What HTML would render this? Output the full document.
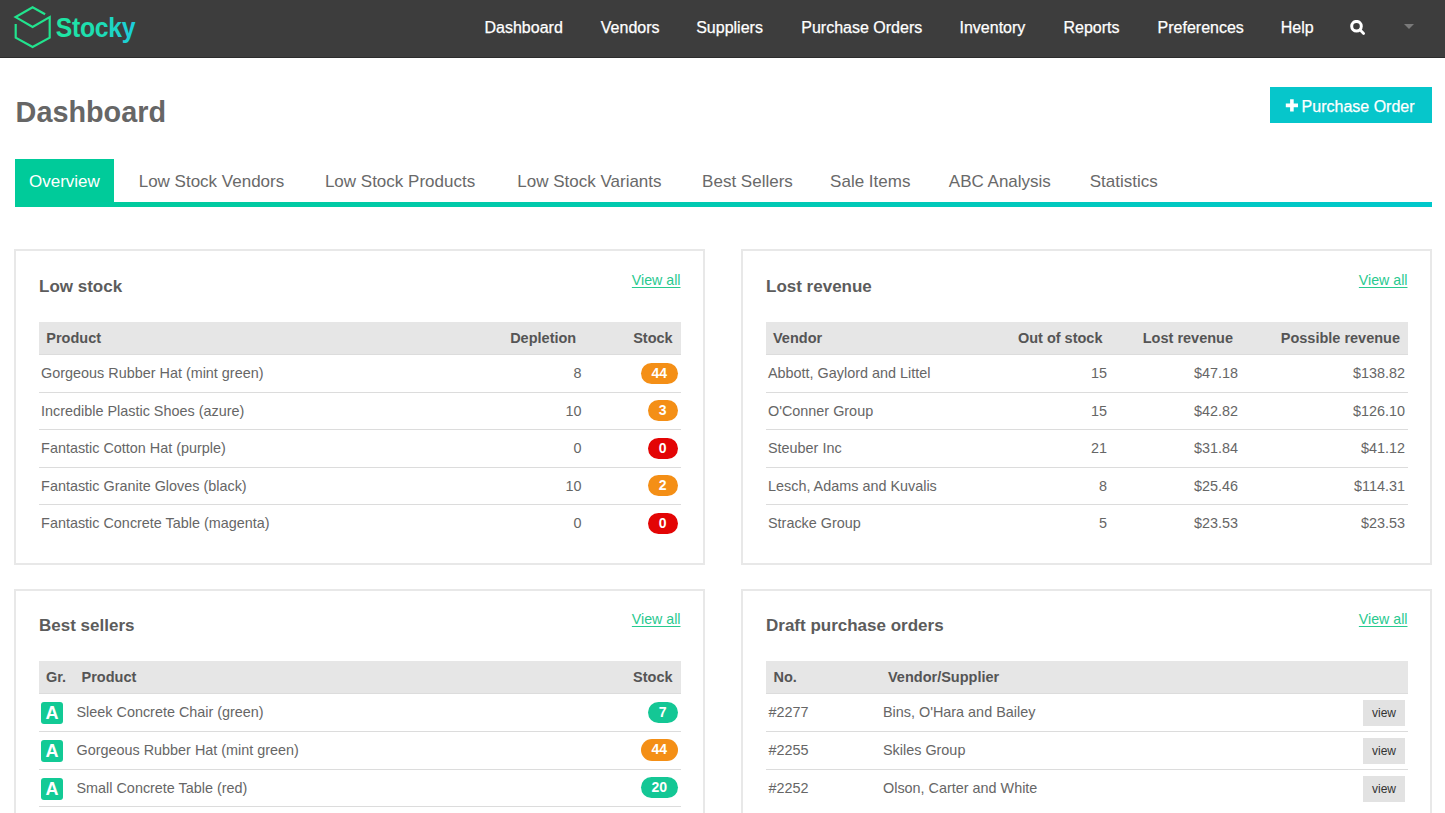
<!DOCTYPE html>
<html><head><meta charset="utf-8">
<style>
*{box-sizing:border-box}
html,body{margin:0;padding:0}
body{width:1445px;height:813px;overflow:hidden;background:#fff;position:relative;font-family:"Liberation Sans",sans-serif;color:#666}
.nav .it,.btn span{-webkit-text-stroke:0.25px currentColor}
.abs{position:absolute;white-space:nowrap;line-height:1}
.nav{position:absolute;left:0;top:0;width:1445px;height:58px;background:#3d3d3d;border-bottom:1px solid #2c2c2c}
.nav .it{position:absolute;top:20.3px;font-size:16px;line-height:1;color:#fff;white-space:nowrap}
.title{position:absolute;left:15.6px;top:97.8px;font-size:28.8px;font-weight:700;line-height:1;color:#666}
.btn{position:absolute;left:1270px;top:87px;width:161.5px;height:36px;background:#06c6cb}
.tabbar{position:absolute;left:14.5px;top:202px;width:1417px;height:5px;background:linear-gradient(90deg,#00cb9a,#00c8cb)}
.tabact{position:absolute;left:14.5px;top:159px;width:99.5px;height:48px;background:#00cb9a}
.tab{position:absolute;top:172.8px;font-size:17px;line-height:1;color:#696969;white-space:nowrap}
.panel{position:absolute;width:691px;border:2px solid #e8e8e8;background:#fff}
.ptitle{position:absolute;left:23px;top:26.5px;font-size:17px;font-weight:700;line-height:1;color:#5c5c5c;white-space:nowrap}
.viewall{position:absolute;right:22.5px;top:21.8px;font-size:14.2px;line-height:1;color:#28c98f;text-decoration:underline;text-underline-offset:1.8px;text-decoration-thickness:1.3px;white-space:nowrap}
.tbl{position:absolute;left:23px;top:71px;width:641.5px}
.th{position:relative;height:33px;background:#e6e6e6;border-bottom:1px solid #dcdcdc}
.th span{position:absolute;top:0;line-height:32px;font-size:14.5px;font-weight:700;color:#555;white-space:nowrap}
.tr{position:relative;height:37.6px;border-bottom:1px solid #dcdcdc}
.tr.last{border-bottom:none}
.tr span{position:absolute;top:0;line-height:36.6px;font-size:14.4px;color:#666;white-space:nowrap}
.r{text-align:right}
.badge{position:absolute;height:21.2px;top:7.5px;border-radius:11px;color:#fff;font-weight:700;font-size:14px;line-height:21.6px;text-align:center}
.or{background:#f48f16}
.rd{background:#e30505}
.gn{background:#14c795}
.grade{position:absolute;left:2.2px;top:8px;width:21.6px;height:22px;border-radius:3px;background:#12ca95;color:#fff;font-weight:700;font-size:18px;line-height:23px;text-align:center}
.vbtn{position:absolute;right:2.5px;top:6px;width:42px;height:26px;background:#e2e2e2;color:#333;font-size:12px;line-height:26px;text-align:center}
</style></head>
<body>
<div class="nav">
  <svg style="position:absolute;left:0;top:0" width="60" height="57" viewBox="0 0 60 57">
    <defs></defs>
    <path d="M45.1,14.3 L32.6,7.2 L15.6,17.1 L32.6,26.9 L49.7,17.1 L49.7,37.7 L32.6,46.9 L15.7,37.7 L15.7,24.1" fill="none" stroke="#22e38e" stroke-width="2.2" stroke-linejoin="miter"/>
  </svg>
  <svg style="position:absolute;left:54px;top:8px" width="90" height="40" viewBox="0 0 90 40">
    <defs><linearGradient id="lg" x1="0" y1="0" x2="1" y2="0"><stop offset="0" stop-color="#1ee6a0"/><stop offset="0.55" stop-color="#1ddcb4"/><stop offset="1" stop-color="#1ccce0"/></linearGradient></defs>
    <text x="2" y="28.9" font-family="Liberation Sans" font-weight="700" font-size="27.5" letter-spacing="-0.3" transform="scale(0.9,1)" fill="url(#lg)">Stocky</text>
  </svg>
  <span class="it" style="left:484.5px">Dashboard</span>
  <span class="it" style="left:600.8px">Vendors</span>
  <span class="it" style="left:696.2px">Suppliers</span>
  <span class="it" style="left:801.3px">Purchase Orders</span>
  <span class="it" style="left:959.5px">Inventory</span>
  <span class="it" style="left:1063.5px">Reports</span>
  <span class="it" style="left:1157.6px">Preferences</span>
  <span class="it" style="left:1280.8px">Help</span>
  <svg style="position:absolute;left:1349px;top:20px" width="18" height="17" viewBox="0 0 18 17">
    <circle cx="7.5" cy="6.2" r="4.8" fill="none" stroke="#fff" stroke-width="3"/>
    <path d="M11,9.8 L14.6,13.4" stroke="#fff" stroke-width="2.8" stroke-linecap="round"/>
  </svg>
  <svg style="position:absolute;left:1403px;top:23px" width="12" height="7" viewBox="0 0 12 7">
    <path d="M1,1 L11,1 L6,6 Z" fill="#7a7a7a"/>
  </svg>
</div>

<div class="title">Dashboard</div>

<div class="btn">
  <svg style="position:absolute;left:14.5px;top:11px" width="15" height="15" viewBox="0 0 15 15"><path d="M6.9,1.2 V13.6 M0.8,7.4 H13" stroke="#fff" stroke-width="3.6"/></svg>
  <span class="abs" style="left:31.6px;top:11.5px;font-size:16px;color:#fff">Purchase Order</span>
</div>

<div class="tabact"></div>
<div class="tabbar"></div>
<span class="tab" style="left:29px;color:#fff">Overview</span>
<span class="tab" style="left:138.7px">Low Stock Vendors</span>
<span class="tab" style="left:324.9px">Low Stock Products</span>
<span class="tab" style="left:517.3px">Low Stock Variants</span>
<span class="tab" style="left:702.1px">Best Sellers</span>
<span class="tab" style="left:830.1px">Sale Items</span>
<span class="tab" style="left:948.8px">ABC Analysis</span>
<span class="tab" style="left:1089.7px">Statistics</span>

<!-- Panel 1: Low stock -->
<div class="panel" style="left:14px;top:249px;height:316px">
  <div class="ptitle">Low stock</div>
  <div class="viewall">View all</div>
  <div class="tbl">
    <div class="th"><span style="left:7.3px">Product</span><span style="right:104.3px">Depletion</span><span style="right:7.8px">Stock</span></div>
    <div class="tr"><span style="left:2.1px">Gorgeous Rubber Hat (mint green)</span><span class="r" style="right:99px">8</span><div class="badge or" style="right:2.5px;width:37.5px">44</div></div>
    <div class="tr"><span style="left:2.1px">Incredible Plastic Shoes (azure)</span><span class="r" style="right:99px">10</span><div class="badge or" style="right:2.5px;width:30.5px">3</div></div>
    <div class="tr"><span style="left:2.1px">Fantastic Cotton Hat (purple)</span><span class="r" style="right:99px">0</span><div class="badge rd" style="right:2.5px;width:30.5px">0</div></div>
    <div class="tr"><span style="left:2.1px">Fantastic Granite Gloves (black)</span><span class="r" style="right:99px">10</span><div class="badge or" style="right:2.5px;width:30.5px">2</div></div>
    <div class="tr last"><span style="left:2.1px">Fantastic Concrete Table (magenta)</span><span class="r" style="right:99px">0</span><div class="badge rd" style="right:2.5px;width:30.5px">0</div></div>
  </div>
</div>

<!-- Panel 2: Lost revenue -->
<div class="panel" style="left:741px;top:249px;height:316px">
  <div class="ptitle">Lost revenue</div>
  <div class="viewall">View all</div>
  <div class="tbl">
    <div class="th"><span style="left:7px">Vendor</span><span style="right:305px">Out of stock</span><span style="right:174.5px">Lost revenue</span><span style="right:7.5px">Possible revenue</span></div>
    <div class="tr"><span style="left:2px">Abbott, Gaylord and Littel</span><span style="right:300.5px">15</span><span style="right:169.5px">$47.18</span><span style="right:2.5px">$138.82</span></div>
    <div class="tr"><span style="left:2px">O'Conner Group</span><span style="right:300.5px">15</span><span style="right:169.5px">$42.82</span><span style="right:2.5px">$126.10</span></div>
    <div class="tr"><span style="left:2px">Steuber Inc</span><span style="right:300.5px">21</span><span style="right:169.5px">$31.84</span><span style="right:2.5px">$41.12</span></div>
    <div class="tr"><span style="left:2px">Lesch, Adams and Kuvalis</span><span style="right:300.5px">8</span><span style="right:169.5px">$25.46</span><span style="right:2.5px">$114.31</span></div>
    <div class="tr last"><span style="left:2px">Stracke Group</span><span style="right:300.5px">5</span><span style="right:169.5px">$23.53</span><span style="right:2.5px">$23.53</span></div>
  </div>
</div>

<!-- Panel 3: Best sellers -->
<div class="panel" style="left:14px;top:589px;height:260px">
  <div class="ptitle" style="top:25.9px">Best sellers</div>
  <div class="viewall" style="top:21.2px">View all</div>
  <div class="tbl" style="top:70.4px">
    <div class="th"><span style="left:7px">Gr.</span><span style="left:42.5px">Product</span><span style="right:7.9px">Stock</span></div>
    <div class="tr"><div class="grade">A</div><span style="left:37.5px">Sleek Concrete Chair (green)</span><div class="badge gn" style="right:2.5px;width:30.5px">7</div></div>
    <div class="tr"><div class="grade">A</div><span style="left:37.5px">Gorgeous Rubber Hat (mint green)</span><div class="badge or" style="right:2.5px;width:37.5px">44</div></div>
    <div class="tr"><div class="grade">A</div><span style="left:37.5px">Small Concrete Table (red)</span><div class="badge gn" style="right:2.5px;width:37.5px">20</div></div>
    <div class="tr"><div class="grade">A</div><span style="left:37.5px">Refined Steel Shirt (blue)</span><div class="badge gn" style="right:2.5px;width:37.5px">18</div></div>
  </div>
</div>

<!-- Panel 4: Draft purchase orders -->
<div class="panel" style="left:741px;top:589px;height:260px">
  <div class="ptitle" style="top:25.9px">Draft purchase orders</div>
  <div class="viewall" style="top:21.2px">View all</div>
  <div class="tbl" style="top:70.4px">
    <div class="th"><span style="left:7.5px">No.</span><span style="left:122px">Vendor/Supplier</span></div>
    <div class="tr"><span style="left:2.5px">#2277</span><span style="left:117px">Bins, O'Hara and Bailey</span><div class="vbtn">view</div></div>
    <div class="tr"><span style="left:2.5px">#2255</span><span style="left:117px">Skiles Group</span><div class="vbtn">view</div></div>
    <div class="tr last"><span style="left:2.5px">#2252</span><span style="left:117px">Olson, Carter and White</span><div class="vbtn">view</div></div>
  </div>
</div>

</body></html>
